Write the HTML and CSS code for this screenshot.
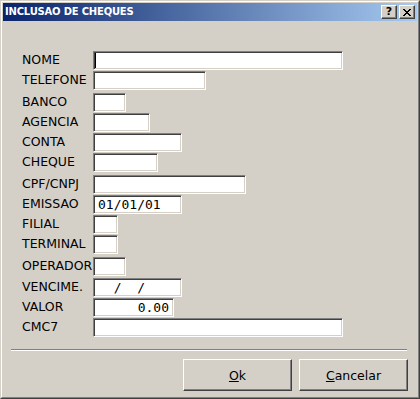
FILE: index.html
```html
<!DOCTYPE html>
<html>
<head>
<meta charset="utf-8">
<link rel="stylesheet" href="styles.css">
</head>
<body>
<div class="window">
  <div class="frame">
    <div class="titlebar">
      <span class="title">INCLUSAO DE CHEQUES</span>
      <div class="tbtns">
        <span class="tbtn help">?</span>
        <span class="tbtn close"><svg width="8" height="7" viewBox="0 0 8 7"><path d="M0 0h2v1h-2zM6 0h2v1h-2zM1 1h2v1h-2zM5 1h2v1h-2zM2 2h4v1h-4zM3 3h2v1h-2zM2 4h4v1h-4zM1 5h2v1h-2zM5 5h2v1h-2zM0 6h2v1h-2zM6 6h2v1h-2z" fill="#000"/></svg></span>
      </div>
    </div>
    <div class="client">
      <div class="form">
        <div class="row"><span class="lbl">NOME</span><div class="inp w250"><span class="caret"></span></div></div>
        <div class="row"><span class="lbl">TELEFONE</span><div class="inp w113"></div></div>
        <div class="row sp3"><span class="lbl">BANCO</span><div class="inp w33"></div></div>
        <div class="row"><span class="lbl">AGENCIA</span><div class="inp w57"></div></div>
        <div class="row"><span class="lbl">CONTA</span><div class="inp w89"></div></div>
        <div class="row"><span class="lbl">CHEQUE</span><div class="inp w65"></div></div>
        <div class="row sp3"><span class="lbl">CPF/CNPJ</span><div class="inp w153"></div></div>
        <div class="row"><span class="lbl">EMISSAO</span><div class="inp w89">01/01/01</div></div>
        <div class="row"><span class="lbl">FILIAL</span><div class="inp w25"></div></div>
        <div class="row"><span class="lbl">TERMINAL</span><div class="inp w25"></div></div>
        <div class="row sp3"><span class="lbl">OPERADOR</span><div class="inp w33"></div></div>
        <div class="row sp2"><span class="lbl">VENCIME.</span><div class="inp w89 pre">  /  /  </div></div>
        <div class="row"><span class="lbl">VALOR</span><div class="inp w81 right">0.00</div></div>
        <div class="row"><span class="lbl">CMC7</span><div class="inp w250"></div></div>
      </div>
      <div class="sep"></div>
      <div class="buttons">
        <button class="btn"><u>O</u>k</button>
        <button class="btn"><u>C</u>ancelar</button>
      </div>
    </div>
  </div>
</div>
</body>
</html>
```
FILE: styles.css
```css
html, body {
  margin: 0;
  padding: 0;
  background: #d4d0c8;
}
.window {
  width: 420px;
  height: 399px;
  box-sizing: border-box;
  border-top: 1px solid #d4d0c8;
  border-left: 1px solid #d4d0c8;
  border-right: 1px solid #404040;
  border-bottom: 1px solid #404040;
  background: #d4d0c8;
}
.frame {
  height: 100%;
  box-sizing: border-box;
  border-top: 1px solid #ffffff;
  border-left: 1px solid #ffffff;
  border-right: 1px solid #808080;
  border-bottom: 1px solid #808080;
  padding: 1px;
  display: flex;
  flex-direction: column;
}
.titlebar {
  height: 18px;
  flex: none;
  background: linear-gradient(to right, #0a246a, #a6caf0);
  display: flex;
  align-items: center;
  justify-content: space-between;
  padding: 0 2px 0 2px;
}
.title {
  color: #ffffff;
  font-family: "DejaVu Sans", sans-serif;
  font-weight: bold;
  font-size: 10px;
  letter-spacing: -0.2px;
  line-height: 18px;
}
.tbtns {
  display: flex;
  gap: 2px;
}
.tbtn {
  width: 16px;
  height: 14px;
  box-sizing: border-box;
  background: #d4d0c8;
  border-top: 1px solid #ffffff;
  border-left: 1px solid #ffffff;
  border-right: 1px solid #404040;
  border-bottom: 1px solid #404040;
  box-shadow: inset -1px -1px 0 #808080;
  display: flex;
  align-items: center;
  justify-content: center;
}
.help {
  font-family: "DejaVu Sans", sans-serif;
  font-weight: bold;
  font-size: 11px;
  line-height: 12px;
  color: #000;
}
.close svg {
  display: block;
}
.client {
  flex: 1;
  display: flex;
  flex-direction: column;
  font-family: "DejaVu Sans", sans-serif;
  font-size: 12.5px;
  color: #000;
}
.form {
  padding: 29px 0 0 19px;
  display: flex;
  flex-direction: column;
}
.row {
  display: flex;
  align-items: center;
  height: 19px;
  margin-top: 1px;
}
.row.sp2 {
  margin-top: 2px;
}
.row.sp3 {
  margin-top: 3px;
}
.lbl {
  width: 71px;
  flex: none;
  white-space: nowrap;
  padding-bottom: 3px;
  line-height: 15px;
}
.inp {
  height: 19px;
  box-sizing: border-box;
  background: #ffffff;
  border-top: 1px solid #808080;
  border-left: 1px solid #808080;
  border-right: 1px solid #ffffff;
  border-bottom: 1px solid #ffffff;
  box-shadow: inset 1px 1px 0 #404040, inset -1px -1px 0 #d4d0c8;
  font-family: "DejaVu Sans Mono", monospace;
  font-size: 13px;
  line-height: 17px;
  padding: 0 4px 0 4px;
  display: flex;
  align-items: center;
}
.pre { white-space: pre; }
.right { justify-content: flex-end; }
.caret {
  width: 1px;
  height: 15px;
  background: #000;
  margin-left: -3px;
}
.w250 { width: 250px; }
.w113 { width: 113px; }
.w33 { width: 33px; }
.w57 { width: 57px; }
.w89 { width: 89px; }
.w65 { width: 65px; }
.w153 { width: 153px; }
.w25 { width: 25px; }
.w81 { width: 81px; }
.sep {
  margin: 12px 10px 0 8px;
  border-top: 1px solid #808080;
  border-bottom: 1px solid #ffffff;
}
.buttons {
  display: flex;
  justify-content: flex-end;
  gap: 7px;
  margin: 8px 9px 0 0;
}
.btn {
  width: 109px;
  height: 32px;
  box-sizing: border-box;
  background: #d4d0c8;
  border-top: 1px solid #ffffff;
  border-left: 1px solid #ffffff;
  border-right: 1px solid #404040;
  border-bottom: 1px solid #404040;
  box-shadow: inset -1px -1px 0 #808080;
  font-family: "DejaVu Sans", sans-serif;
  font-size: 12.5px;
  color: #000;
  padding: 0;
  margin: 0;
}
```
